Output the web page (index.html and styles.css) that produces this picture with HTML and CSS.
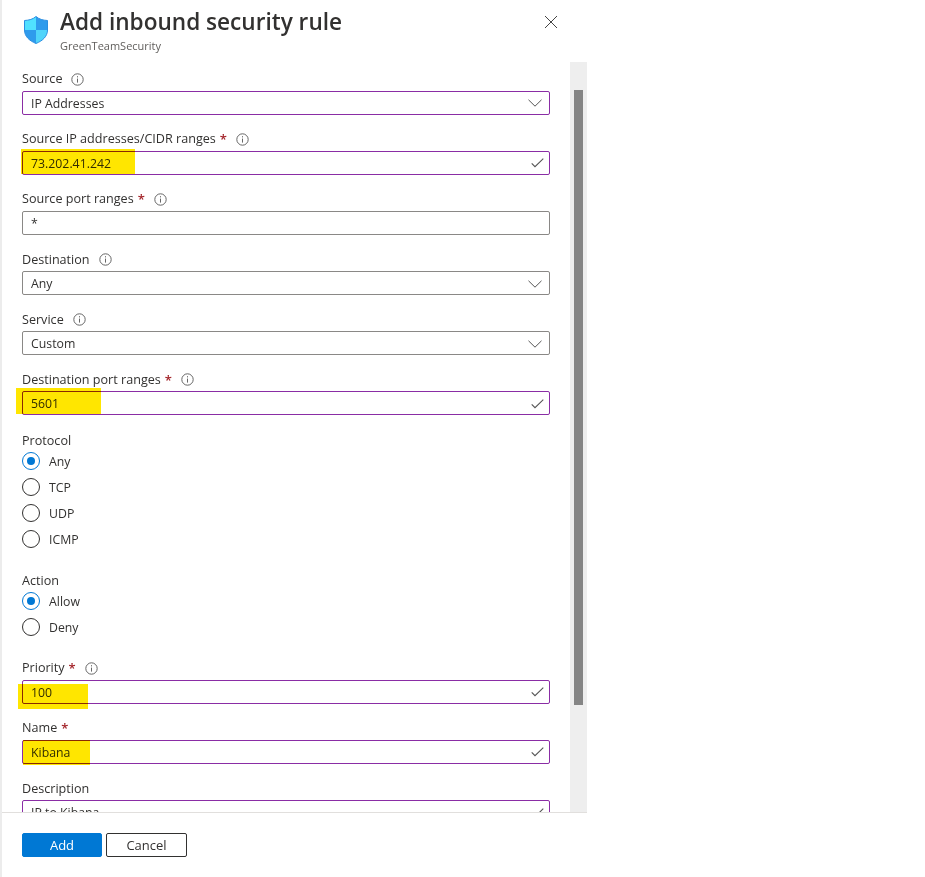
FILE: index.html
```html
<!DOCTYPE html>
<html lang="en">
<head>
<meta charset="utf-8">
<title>Add inbound security rule</title>
<link rel="stylesheet" href="styles.css">
</head>
<body>
<svg class="sprites" width="0" height="0" aria-hidden="true">
  <symbol id="info" viewBox="0 0 13 13"><circle cx="6.500" cy="6.500" r="5.700" fill="none" stroke="#666" stroke-width="1"/><path d="M6.500 5.600v4M6.500 3.200v1.200" stroke="#666" stroke-width="1" fill="none"/></symbol>
  <symbol id="chev" viewBox="0 0 14 8"><path d="M.5.800 7 7.200 13.500.800" fill="none" stroke="#555" stroke-width="1"/></symbol>
  <symbol id="check" viewBox="0 0 13 10"><path d="M.7 5.300 4 8.700 12.300.7" fill="none" stroke="#555" stroke-width="1.100"/></symbol>
</svg>
<div class="edge"></div>
<main class="panel">
  <header class="head">
    <svg class="shield" width="24" height="28" viewBox="0 0 24 28">
      <path d="M12 .5C9 3.200 5 4.300.5 4.500V14H12z" fill="#50e0ff"/>
      <path d="M12 .5c3 2.700 7 3.800 11.500 4V14H12z" fill="#2f9bec"/>
      <path d="M.5 14c0 6.300 4.700 10.700 11.500 13.500V14z" fill="#2f9bec"/>
      <path d="M23.500 14c0 6.300-4.700 10.700-11.500 13.500V14z" fill="#50d4fa"/>
      <path d="M12 .5C9 3.200 5 4.300.5 4.500V14c0 6.300 4.700 10.700 11.500 13.500 6.800-2.800 11.500-7.200 11.500-13.500V4.500C19 4.300 15 3.200 12 .5z" fill="none" stroke="#2a8ee2" stroke-width="1"/>
    </svg>
    <div class="titles">
      <h1>Add inbound security rule</h1>
      <p>GreenTeamSecurity</p>
    </div>
    <button class="close" aria-label="Close"><svg width="14" height="14" viewBox="0 0 14 14"><path d="M1 1l12 12M13 1 1 13" stroke="#444" stroke-width="1" fill="none"/></svg></button>
  </header>

  <div class="body">
    <form class="form">
      <div class="field">
        <div class="label">Source <svg class="i"><use href="#info"/></svg></div>
        <div class="input"><span>IP Addresses</span><svg class="chev"><use href="#chev"/></svg></div>
      </div>
      <div class="field">
        <div class="label">Source IP addresses/CIDR ranges <b>*</b> <svg class="i"><use href="#info"/></svg></div>
        <div class="input"><span>73.202.41.242</span><svg class="check"><use href="#check"/></svg></div>
        <i class="mark mark-ip"></i>
      </div>
      <div class="field">
        <div class="label">Source port ranges <b>*</b> <svg class="i"><use href="#info"/></svg></div>
        <div class="input plain"><span>*</span></div>
      </div>
      <div class="field">
        <div class="label">Destination <svg class="i"><use href="#info"/></svg></div>
        <div class="input plain"><span>Any</span><svg class="chev"><use href="#chev"/></svg></div>
      </div>
      <div class="field">
        <div class="label">Service <svg class="i"><use href="#info"/></svg></div>
        <div class="input plain"><span>Custom</span><svg class="chev"><use href="#chev"/></svg></div>
      </div>
      <div class="field">
        <div class="label">Destination port ranges <b>*</b> <svg class="i"><use href="#info"/></svg></div>
        <div class="input"><span>5601</span><svg class="check"><use href="#check"/></svg></div>
        <i class="mark mark-port"></i>
      </div>
      <div class="group group-protocol">
        <div class="label">Protocol</div>
        <div class="radio on"><i></i>Any</div>
        <div class="radio"><i></i>TCP</div>
        <div class="radio"><i></i>UDP</div>
        <div class="radio"><i></i>ICMP</div>
      </div>
      <div class="group group-action">
        <div class="label">Action</div>
        <div class="radio on"><i></i>Allow</div>
        <div class="radio"><i></i>Deny</div>
      </div>
      <div class="field">
        <div class="label">Priority <b>*</b> <svg class="i"><use href="#info"/></svg></div>
        <div class="input"><span>100</span><svg class="check"><use href="#check"/></svg></div>
        <i class="mark mark-pri"></i>
      </div>
      <div class="field">
        <div class="label">Name <b>*</b></div>
        <div class="input"><span>Kibana</span><svg class="check"><use href="#check"/></svg></div>
        <i class="mark mark-name"></i>
      </div>
      <div class="field">
        <div class="label">Description</div>
        <div class="input"><span>IP to Kibana</span><svg class="check"><use href="#check"/></svg></div>
      </div>
    </form>
    <div class="scrollbar"><div class="thumb"></div></div>
  </div>

  <footer class="foot">
    <button class="btn primary">Add</button>
    <button class="btn">Cancel</button>
  </footer>
</main>
</body>
</html>
```
FILE: styles.css
```css
* { box-sizing: border-box; }
html, body { margin: 0; height: 100%; background: #fff; }
body { font-family: "Open Sans", "Noto Sans", sans-serif; font-size: 12.300px; color: #323130; overflow: hidden; }
.sprites { position: absolute; }
.edge { position: absolute; left: 0; top: 0; width: 2px; height: 877px; background: #ececec; }
.panel { width: 587px; height: 877px; display: flex; flex-direction: column; }
.head { height: 62px; flex: none; display: flex; padding-left: 24px; position: relative; }
.shield { margin-top: 16px; flex: none; }
.titles { margin-left: 12px; }
h1 { margin: 6px 0 0; font-size: 22.600px; line-height: 32px; font-weight: 600; color: #323130; }
.titles p { margin: 1px 0 0; font-size: 11px; line-height: 14px; color: #605e5c; }
.close { position: absolute; left: 544px; top: 15px; padding: 0; border: 0; background: none; line-height: 0; }
.body { height: 750px; flex: none; display: flex; overflow: hidden; }
.form { width: 570px; flex: none; padding: 6.500px 20px 0 22px; }
.field { position: relative; margin-bottom: 14.200px; }
.label { height: 22px; padding-bottom: 1px; font-size: 12.600px; line-height: 18px; white-space: nowrap; display: flex; align-items: center; gap: 4px; }
.label b { color: #a4262c; font-weight: 600; font-size: 13px; line-height: 18px; }
.i { width: 13px; height: 13px; margin-left: 5px; }
.input { height: 24px; border: 1px solid #8a2da5; border-radius: 2px; padding: 1px 8px 0; display: flex; align-items: center; justify-content: space-between; line-height: 21px; }
.input.plain { border-color: #8a8886; }
.chev { width: 14px; height: 8px; margin-right: -1px; }
.check { width: 13px; height: 10px; margin-right: -3px; }
.mark { position: absolute; background: #ffe600; mix-blend-mode: multiply; pointer-events: none; }
.mark-ip { left: -1px; top: 20px; width: 114px; height: 25px; }
.mark-port { left: -6px; top: 19px; width: 85px; height: 26px; }
.mark-pri { left: -4px; top: 26px; width: 70px; height: 25px; }
.mark-name { left: 1px; top: 22px; width: 67px; height: 25px; }
.group-protocol { padding-top: 2.500px; margin-bottom: 20px; }
.group-action { margin-bottom: 17.500px; }
.group .label { height: 16px; padding: 2px 0 0; }
.radio { height: 26px; display: flex; align-items: center; gap: 9px; }
.radio i { width: 18px; height: 18px; border: 1px solid #323130; border-radius: 50%; flex: none; display: flex; align-items: center; justify-content: center; }
.radio.on i { border-color: #0078d4; }
.radio.on i::after { content: ""; width: 8px; height: 8px; border-radius: 50%; background: #0078d4; }
.scrollbar { width: 17px; flex: none; background: #eee; padding: 28px 4px 0 4px; height: 750px; }
.thumb { height: 615px; background: #858585; }
.foot { height: 65px; flex: none; border-top: 1px solid #e1dfdd; padding: 20px 0 0 22px; display: flex; gap: 4px; align-items: flex-start; }
.btn { height: 24px; width: 81px; border: 1px solid #323130; border-radius: 2px; background: #fff; font: inherit; font-size: 13px; color: #323130; padding: 0; }
.btn.primary { width: 80px; background: #0078d4; border-color: #0078d4; color: #fff; }
```
